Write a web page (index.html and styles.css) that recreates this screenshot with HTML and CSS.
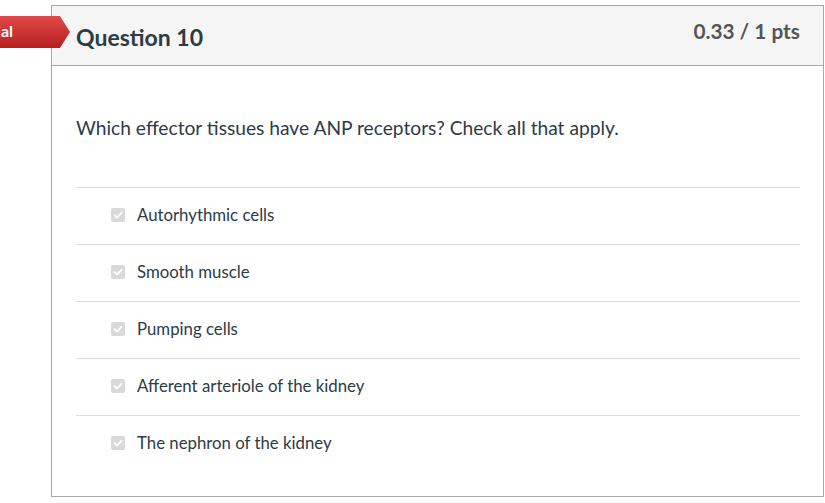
FILE: index.html
```html
<!DOCTYPE html>
<html>
<head>
<meta charset="utf-8">
<link rel="stylesheet" href="styles.css">
</head>
<body>
<div class="page">
  <div class="badge"><span>Partial</span></div>
  <div class="card">
    <div class="card-header">
      <h2 class="q-title">Question 10</h2>
      <div class="q-points">0.33 / 1 pts</div>
    </div>
    <div class="card-body">
      <p class="q-text">Which effector tissues have ANP receptors? Check all that apply.</p>
      <div class="answers">
        <div class="answer"><span class="cbox"><svg viewBox="0 0 14 14" width="14" height="14"><path d="M3.5 7.2 L6 9.6 L10.6 4.6" fill="none" stroke="#fff" stroke-width="1.8" stroke-linecap="round" stroke-linejoin="round"/></svg></span><span class="a-text">Autorhythmic cells</span></div>
        <div class="answer"><span class="cbox"><svg viewBox="0 0 14 14" width="14" height="14"><path d="M3.5 7.2 L6 9.6 L10.6 4.6" fill="none" stroke="#fff" stroke-width="1.8" stroke-linecap="round" stroke-linejoin="round"/></svg></span><span class="a-text">Smooth muscle</span></div>
        <div class="answer"><span class="cbox"><svg viewBox="0 0 14 14" width="14" height="14"><path d="M3.5 7.2 L6 9.6 L10.6 4.6" fill="none" stroke="#fff" stroke-width="1.8" stroke-linecap="round" stroke-linejoin="round"/></svg></span><span class="a-text">Pumping cells</span></div>
        <div class="answer"><span class="cbox"><svg viewBox="0 0 14 14" width="14" height="14"><path d="M3.5 7.2 L6 9.6 L10.6 4.6" fill="none" stroke="#fff" stroke-width="1.8" stroke-linecap="round" stroke-linejoin="round"/></svg></span><span class="a-text">Afferent arteriole of the kidney</span></div>
        <div class="answer"><span class="cbox"><svg viewBox="0 0 14 14" width="14" height="14"><path d="M3.5 7.2 L6 9.6 L10.6 4.6" fill="none" stroke="#fff" stroke-width="1.8" stroke-linecap="round" stroke-linejoin="round"/></svg></span><span class="a-text">The nephron of the kidney</span></div>
      </div>
    </div>
  </div>
</div>
</body>
</html>
```

FILE: styles.css
```css
* { box-sizing: border-box; }
html, body {
  margin: 0;
  padding: 0;
  background: #fff;
  font-family: Lato, "Open Sans", "Liberation Sans", sans-serif;
  color: #2d3b45;
}
.page {
  position: relative;
  width: 825px;
  height: 503px;
  padding: 5px 0 0 51px;
}
.card {
  width: 773px;
  height: 492px;
  border: 1px solid #a8a8a8;
  background: #fff;
}
.card-header {
  height: 60px;
  background: #f5f5f5;
  border-bottom: 1px solid #a8a8a8;
  display: flex;
  justify-content: space-between;
  align-items: flex-start;
  padding: 0 23px 0 24px;
}
.q-title {
  margin: 16px 0 0 0;
  font-size: 23px;
  font-weight: 700;
  line-height: 30px;
  color: #2d3b45;
}
.q-points {
  margin-top: 12px;
  font-size: 20.8px;
  font-weight: 700;
  line-height: 26px;
  color: #555;
}
.card-body {
  padding: 0 23px 0 24px;
}
.q-text {
  margin: 49px 0 0 0;
  font-size: 19.2px;
  line-height: 26px;
  color: #2d3b45;
}
.answers {
  margin-top: 46px;
}
.answer {
  height: 57px;
  border-top: 1px solid #dcdcdc;
  display: flex;
  align-items: center;
  padding-left: 35px;
  padding-bottom: 2px;
}
.cbox {
  width: 14px;
  height: 14px;
  border-radius: 2px;
  background: #d9d9d9;
  display: inline-flex;
  margin-right: 12px;
}
.cbox svg { display: block; }
.a-text {
  font-size: 16.8px;
  line-height: 20px;
  color: #2d3b45;
}
.badge {
  position: absolute;
  left: 0;
  top: 16px;
  width: 70px;
  height: 32px;
  overflow: hidden;
}
.badge::before {
  content: "";
  position: absolute;
  left: 0;
  top: 0;
  width: 60px;
  height: 32px;
  background: linear-gradient(#e24848, #b52020);
}
.badge::after {
  content: "";
  position: absolute;
  left: 60px;
  top: 0;
  width: 10px;
  height: 32px;
  background: linear-gradient(#e24848, #b52020);
  clip-path: polygon(0 0, 100% 50%, 0 100%);
}
.badge span {
  position: absolute;
  z-index: 1;
  right: 57px;
  top: 6px;
  color: #fff;
  font-weight: 700;
  font-size: 16px;
  line-height: 18px;
}
```
